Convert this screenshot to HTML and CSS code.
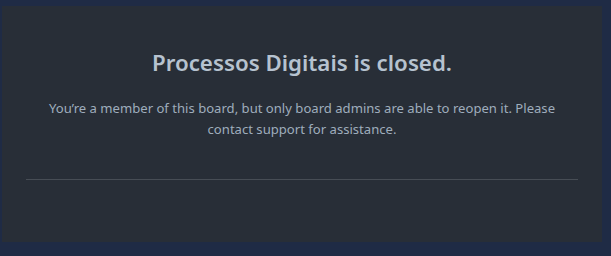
FILE: index.html
```html
<!DOCTYPE html>
<html lang="en">
<head>
    <meta charset="UTF-8">
    <meta name="viewport" content="width=device-width, initial-scale=1.0">
    <title>Board closed</title>
    <link rel="stylesheet" href="styles.css">
</head>
<body>
    <div class="wrapper">
        <div class="dialog">
            <h1 class="dialog-title">Processos Digitais is closed.</h1>
            <p class="dialog-text">You’re a member of this board, but only board admins are able to reopen it. Please contact support for assistance.</p>
            <hr class="dialog-divider">
        </div>
    </div>
</body>
</html>
```

FILE: styles.css
```css
body {
    margin: 0;
    background: #1f2b45;
    font-family: "Noto Sans", "Open Sans", sans-serif;
}
.wrapper {
    padding: 6px 9px 14px 2px;
}
.dialog {
    width: 600px;
    height: 236px;
    box-sizing: border-box;
    padding: 42px 24px 0;
    background: #282e37;
    text-align: center;
}
.dialog-title {
    margin: 0 0 20px;
    font-size: 22.3px;
    line-height: 30px;
    font-weight: 600;
    color: #b6c2cf;
}
.dialog-text {
    margin: 0 12px;
    font-size: 13.1px;
    line-height: 21px;
    color: #9fadbc;
}
.dialog-divider {
    margin: 39px 0 0;
    border: 0;
    height: 1px;
    background: #474d55;
}
```
